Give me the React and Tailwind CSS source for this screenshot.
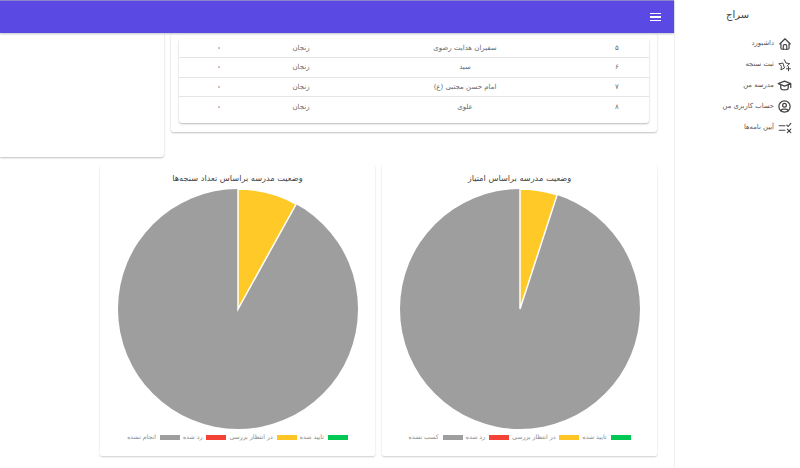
import React from "react";
import { TbHome, TbSchool, TbUserCircle } from "react-icons/tb";

const font = "font-['DejaVu_Sans',sans-serif]";

function StarPlus() {
  return (
    <svg width="14" height="14" viewBox="0 0 24 24" fill="none" stroke="#444" strokeWidth="1.7" strokeLinejoin="round" strokeLinecap="round">
      <path d="M11 3l2.7 5.7 6.3.9-4.500 4.300M10.500 17.400l-5.500 3 1-6.200L1.500 9.700l6.300-.9z" />
      <path d="M18 15v7M14.500 18.500h7" />
    </svg>
  );
}

function RuleIcon() {
  return (
    <svg width="14" height="14" viewBox="0 0 24 24" fill="none" stroke="#444" strokeWidth="1.8" strokeLinecap="round" strokeLinejoin="round">
      <path d="M2 8h10M2 16h10" />
      <path d="M15 7l2.500 2.500L22 4M16 14l6 6M22 14l-6 6" />
    </svg>
  );
}

function Pie({ sweep }) {
  const a = (sweep * Math.PI) / 180;
  const x = 120 + 120 * Math.sin(a);
  const y = 120 - 120 * Math.cos(a);
  return (
    <svg width="240" height="240" viewBox="0 0 240 240" className="block">
      <circle cx="120" cy="120" r="120" fill="#9e9e9e" />
      <path d={`M120 120L120 0A120 120 0 0 1 ${x} ${y}Z`} fill="#ffca28" stroke="#fff" strokeWidth="1.5" />
    </svg>
  );
}

function Legend({ last }) {
  const items = [
    ["تایید شده", "bg-[#00c853]"],
    ["در انتظار بررسی", "bg-[#ffc526]"],
    ["رد شده", "bg-[#f44336]"],
    [last, "bg-[#9e9e9e]"],
  ];
  return (
    <div dir="rtl" className="flex items-center justify-center gap-[3px] mt-[3px]">
      {items.map(([t, c]) => (
        <div key={t} className="flex items-center gap-[4px]">
          <span className={`w-[20px] h-[5px] ${c}`} />
          <span className="text-[6.2px] leading-[10px] text-[#888]">{t}</span>
        </div>
      ))}
    </div>
  );
}

function ChartCard({ title, sweep, last }) {
  return (
    <div className="w-[275px] h-[291px] bg-white rounded-[2px] shadow-[0_1px_2px_rgba(0,0,0,0.2)] flex flex-col items-center pt-[6px]">
      <div dir="rtl" className="text-[8.2px] leading-[14px] text-[#444] mb-[4px]">{title}</div>
      <Pie sweep={sweep} />
      <Legend last={last} />
    </div>
  );
}

const rows = [
  ["۵", "سفیران هدایت رضوی", "زنجان", "۰"],
  ["۶", "سید", "زنجان", "۰"],
  ["۷", "امام حسن مجتبی (ع)", "زنجان", "۰"],
  ["۸", "علوی", "زنجان", "۰"],
];

const nav = [
  ["داشبورد", <TbHome size={14} color="#444" />],
  ["ثبت سنجه", <StarPlus />],
  ["مدرسه من", <TbSchool size={15} color="#444" />],
  ["حساب کاربری من", <TbUserCircle size={15} color="#444" />],
  ["آیین نامه‌ها", <RuleIcon />],
];

export default function App() {
  return (
    <div className={`flex w-[800px] h-[468px] overflow-hidden bg-white ${font}`}>
      <main className="w-[674px] shrink-0">
        <header className="h-[33px] bg-[#5a4ae3] border-t border-[#8c86c9] shadow-[0_1px_2px_rgba(0,0,0,0.25)] flex items-center justify-end pr-[13px] relative">
          <div className="flex flex-col gap-[2px]">
            <span className="block w-[11px] h-[1.5px] bg-white" />
            <span className="block w-[11px] h-[1.5px] bg-white" />
            <span className="block w-[11px] h-[1.5px] bg-white" />
          </div>
        </header>
        <div className="flex items-start gap-[7px]">
          <div className="w-[164px] h-[124px] bg-white rounded-br-[3px] shadow-[0_1px_2px_rgba(0,0,0,0.25)]" />
          <div className="w-[486px] h-[99px] bg-white rounded-[3px] shadow-[0_1px_2px_rgba(0,0,0,0.25)] px-[8px] pt-[6px]">
            <div className="h-[84px] rounded-[3px] shadow-[0_1px_2px_rgba(0,0,0,0.28)] bg-white">
              {rows.map((r, i) => (
                <div key={r[0]} dir="rtl" className={`h-[19.4px] flex items-center text-[7px] text-[#666] ${i < 3 ? "border-b border-[#e5e5e5]" : ""}`}>
                  <div className="w-[64px] text-center">{r[0]}</div>
                  <div className="w-[240px] text-center">{r[1]}</div>
                  <div className="w-[88px] text-center">{r[2]}</div>
                  <div className="w-[76px] text-center font-bold">{r[3]}</div>
                </div>
              ))}
            </div>
          </div>
        </div>
        <div className="flex justify-end gap-[7px] pr-[17px] mt-[8px]">
          <ChartCard title="وضعیت مدرسه براساس تعداد سنجه‌ها" sweep={29} last="انجام نشده" />
          <ChartCard title="وضعیت مدرسه براساس امتیاز" sweep={18} last="کسب نشده" />
        </div>
      </main>
      <aside dir="rtl" className="flex-1 border-l border-[#f0f0f0]">
        <div className="h-[30px] text-center text-[10px] leading-[30px] text-[#444]">سراج</div>
        <nav className="flex flex-col pt-[3px]">
          {nav.map(([t, icon]) => (
            <div key={t} className="h-[21px] flex items-center gap-[3px] pr-[8px]">
              <span className="w-[15px] flex justify-center">{icon}</span>
              <span className="text-[6.8px] text-[#555]">{t}</span>
            </div>
          ))}
        </nav>
      </aside>
    </div>
  );
}
